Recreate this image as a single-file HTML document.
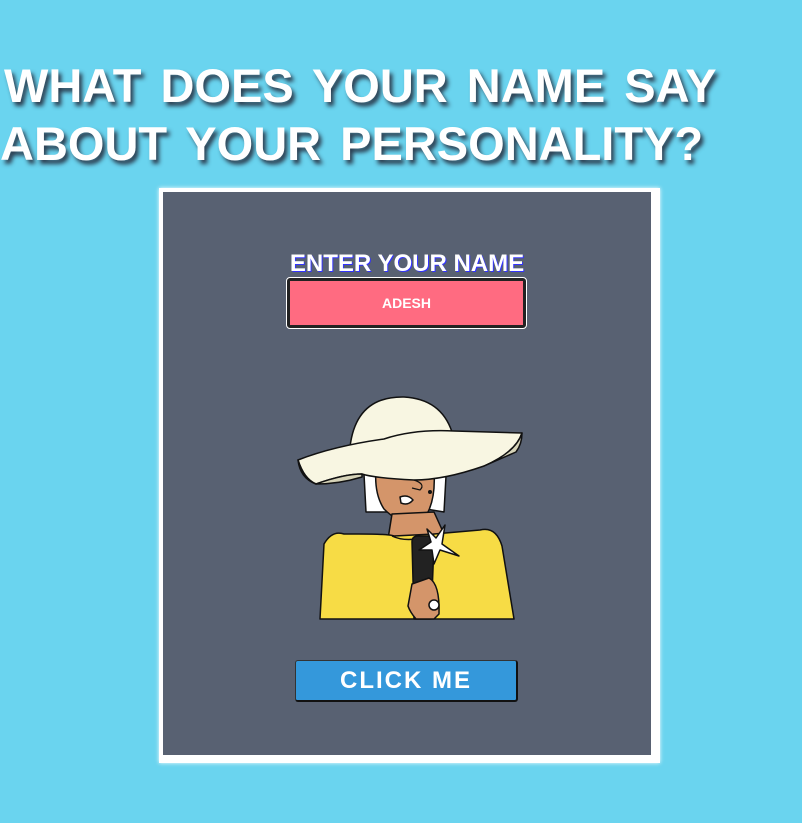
<!DOCTYPE html>
<html><head><style>
html,body{margin:0;padding:0;width:802px;height:823px;overflow:hidden;background:#6ad4ef;}
.t{position:absolute;left:2px;font-family:"Liberation Sans",sans-serif;font-weight:900;font-size:47px;color:#fff;text-shadow:3px 4px 4px #2c3e50;white-space:nowrap;word-spacing:6px;letter-spacing:0px;}
.card{position:absolute;left:159px;top:188px;width:488px;height:563px;background:#586172;border-style:solid;border-color:#fff;border-width:4px 9px 8px 4px;box-shadow:0 0 4px #fff;}
.lbl{position:absolute;left:0;width:100%;top:58px;text-align:center;font-family:"Liberation Sans",sans-serif;font-weight:bold;font-size:24px;color:#fff;text-shadow:1px 1px 0 #33f;}
.inp{position:absolute;left:124px;top:86px;width:239px;height:50px;background:#ff6b81;border:3px solid #222;outline:1px solid #fff;border-radius:3px;box-sizing:border-box;color:#fff;font:bold 14px "Liberation Sans",sans-serif;text-align:center;line-height:44px;}
.btn{position:absolute;left:132px;top:468px;width:223px;height:42px;background:#3498db;border:1px solid #333;border-right:2px solid #111;border-bottom:2px solid #111;border-radius:3px;box-sizing:border-box;color:#fff;font:bold 24px "Liberation Sans",sans-serif;text-align:center;line-height:39px;letter-spacing:2px;}
</style></head><body>
<div class="t" style="top:58px;left:4px;">WHAT DOES YOUR NAME SAY</div>
<div class="t" style="top:116px;left:0;">ABOUT YOUR PERSONALITY?</div>
<div class="card">
<div class="lbl">ENTER YOUR NAME</div>
<div class="inp">ADESH</div>
<svg style="position:absolute;left:121px;top:192px" width="250" height="240" viewBox="0 0 250 240">
<g stroke="#111" stroke-width="1.5" stroke-linejoin="round">
<path d="M80 90 L82 128 L108 128 L105 95 Z" fill="#fff"/>
<path d="M150 90 L162 92 L160 128 L142 125 Z" fill="#fff"/>
<path d="M92 85 Q90 110 100 125 Q120 145 140 135 Q152 118 150 88 Z" fill="#d4956a"/>
<path d="M108 130 L104 155 Q130 165 160 150 L150 128 Z" fill="#d4956a"/>
<path d="M36 235 L40 160 Q48 146 60 150 L75 150 Q105 150 110 152 L150 150 L196 146 Q212 142 218 162 L230 235 Z" fill="#f7dc45"/>
<path d="M108 152 Q125 160 150 150" fill="none"/>
<path d="M128 158 Q128 152 134 152 L145 152 Q150 152 150 160 L147 235 L130 235 Z" fill="#222"/>
<path d="M128 200 L145 194 Q156 200 155 230 L150 235 L132 235 Q126 228 124 222 Z" fill="#d4956a"/>
<circle cx="150" cy="221" r="5" fill="#fff"/>
<path d="M161 141 L158 160 L175 172 L156 166 L150 180 L148 166 L135 166 L147 158 L143 145 L152 154 Z" fill="#fff"/>
<path d="M66 63 Q72 12 120 13 Q157 15 168 48 Z" fill="#f8f6e2"/>
<path d="M14 76 Q50 62 100 55 Q130 45 170 47 L238 49 Q232 68 200 82 Q160 96 130 96 Q90 94 78 90 Q60 90 32 100 Q20 95 14 76 Z" fill="#f8f6e2"/>
<path d="M14 76 Q20 95 32 100 Q60 90 78 90 L78 93 Q55 100 32 100 Q16 94 14 76 Z" fill="#d6d3b8"/>
<path d="M200 82 Q232 68 238 49 Q238 60 232 68 Z" fill="#d6d3b8"/>
<path d="M116 113 Q124 110 129 116 Q124 122 117 119 Z" fill="#fff"/>
</g>
<circle cx="146" cy="108" r="2" fill="#111"/>
<path d="M130 96 Q142 100 136 106 L128 104" fill="none" stroke="#111" stroke-width="1.2"/>
</svg>
<div class="btn">CLICK ME</div>
</div>
</body></html>
